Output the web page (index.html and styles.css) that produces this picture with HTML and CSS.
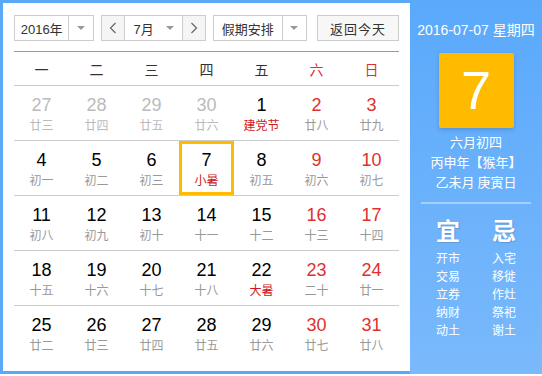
FILE: index.html
```html
<!DOCTYPE html>
<html lang="zh">
<head>
<meta charset="utf-8">
<title>万年历</title>
<link rel="stylesheet" href="styles.css">
</head>
<body>
<div class="widget">
  <div class="main">
    <div class="toolbar">
      <div class="select sel-year">
        <span class="sel-text">2016年</span>
        <span class="sel-arrow"><i class="tri"></i></span>
      </div>
      <div class="month-group">
        <span class="nav-btn"><svg width="8" height="12" viewBox="0 0 8 12"><polyline points="6.5,1 1.5,6 6.5,11" fill="none" stroke="#666" stroke-width="1.2"/></svg></span>
        <span class="month-mid"><span class="month-text">7月</span><i class="tri"></i></span>
        <span class="nav-btn"><svg width="8" height="12" viewBox="0 0 8 12"><polyline points="1.5,1 6.5,6 1.5,11" fill="none" stroke="#666" stroke-width="1.2"/></svg></span>
      </div>
      <div class="select sel-holiday">
        <span class="sel-text">假期安排</span>
        <span class="sel-arrow"><i class="tri"></i></span>
      </div>
      <div class="today-btn">返回今天</div>
    </div>
    <div class="calendar">
      <div class="week-head">
        <span>一</span><span>二</span><span>三</span><span>四</span><span>五</span><span class="red">六</span><span class="red">日</span>
      </div>
      <div class="row">
        <div class="cell other"><b>27</b><em>廿三</em></div>
        <div class="cell other"><b>28</b><em>廿四</em></div>
        <div class="cell other"><b>29</b><em>廿五</em></div>
        <div class="cell other"><b>30</b><em>廿六</em></div>
        <div class="cell"><b>1</b><em class="fest">建党节</em></div>
        <div class="cell weekend"><b>2</b><em>廿八</em></div>
        <div class="cell weekend"><b>3</b><em>廿九</em></div>
      </div>
      <div class="row">
        <div class="cell"><b>4</b><em>初一</em></div>
        <div class="cell"><b>5</b><em>初二</em></div>
        <div class="cell"><b>6</b><em>初三</em></div>
        <div class="cell today"><b>7</b><em class="fest">小暑</em></div>
        <div class="cell"><b>8</b><em>初五</em></div>
        <div class="cell weekend"><b>9</b><em>初六</em></div>
        <div class="cell weekend"><b>10</b><em>初七</em></div>
      </div>
      <div class="row">
        <div class="cell"><b>11</b><em>初八</em></div>
        <div class="cell"><b>12</b><em>初九</em></div>
        <div class="cell"><b>13</b><em>初十</em></div>
        <div class="cell"><b>14</b><em>十一</em></div>
        <div class="cell"><b>15</b><em>十二</em></div>
        <div class="cell weekend"><b>16</b><em>十三</em></div>
        <div class="cell weekend"><b>17</b><em>十四</em></div>
      </div>
      <div class="row">
        <div class="cell"><b>18</b><em>十五</em></div>
        <div class="cell"><b>19</b><em>十六</em></div>
        <div class="cell"><b>20</b><em>十七</em></div>
        <div class="cell"><b>21</b><em>十八</em></div>
        <div class="cell"><b>22</b><em class="fest">大暑</em></div>
        <div class="cell weekend"><b>23</b><em>二十</em></div>
        <div class="cell weekend"><b>24</b><em>廿一</em></div>
      </div>
      <div class="row">
        <div class="cell"><b>25</b><em>廿二</em></div>
        <div class="cell"><b>26</b><em>廿三</em></div>
        <div class="cell"><b>27</b><em>廿四</em></div>
        <div class="cell"><b>28</b><em>廿五</em></div>
        <div class="cell"><b>29</b><em>廿六</em></div>
        <div class="cell weekend"><b>30</b><em>廿七</em></div>
        <div class="cell weekend"><b>31</b><em>廿八</em></div>
      </div>
    </div>
  </div>
  <div class="side">
    <div class="side-date">2016-07-07 星期四</div>
    <div class="big-day">7</div>
    <div class="lunar">
      <div>六月初四</div>
      <div>丙申年【猴年】</div>
      <div>乙未月 庚寅日</div>
    </div>
    <div class="sep"></div>
    <div class="yiji">
      <div class="col">
        <div class="yj-title">宜</div>
        <div>开市</div><div>交易</div><div>立券</div><div>纳财</div><div>动土</div>
      </div>
      <div class="col">
        <div class="yj-title">忌</div>
        <div>入宅</div><div>移徙</div><div>作灶</div><div>祭祀</div><div>谢土</div>
      </div>
    </div>
  </div>
</div>
</body>
</html>
```
FILE: styles.css
```css
* { box-sizing: border-box; }
html, body { margin: 0; padding: 0; background: #fff; }
body { font-family: "Liberation Sans", "Noto Sans CJK SC", sans-serif; }

.widget {
  display: flex;
  width: 542px;
  height: 374px;
  border: 3px solid #5aa9f8;
  border-right: none;
}

.main {
  width: 407px;
  padding: 12px 11px 0 11px;
  background: #fff;
}

.toolbar {
  display: flex;
  height: 26px;
  font-size: 13px;
  color: #333;
  font-family: "Liberation Sans", "Noto Sans CJK SC", sans-serif;
}

.select {
  display: flex;
  border: 1px solid #ccc;
  background: #fff;
}
.sel-text {
  display: flex;
  align-items: center;
  justify-content: center;
  border-right: 1px solid #ccc;
}
.sel-arrow {
  display: flex;
  align-items: center;
  justify-content: center;
  width: 24px;
}
.tri {
  display: block;
  width: 0;
  height: 0;
  border-left: 4px solid transparent;
  border-right: 4px solid transparent;
  border-top: 4px solid #999;
}
.sel-year { width: 80px; }
.sel-year .sel-text { width: 55px; }
.sel-holiday { width: 94px; margin-left: 7px; }
.sel-holiday .sel-text { width: 70px; }

.month-group {
  display: flex;
  width: 105px;
  margin-left: 7px;
  border: 1px solid #ccc;
}
.nav-btn {
  display: flex;
  align-items: center;
  justify-content: center;
  width: 22px;
  background: #f5f5f5;
}
.month-mid {
  display: flex;
  align-items: center;
  width: 61px;
  padding-left: 9px;
  border-left: 1px solid #ccc;
  border-right: 1px solid #ccc;
  background: #fff;
}
.month-text { flex: 1; }
.month-mid .tri { margin-right: 8px; }

.today-btn {
  display: flex;
  align-items: center;
  justify-content: center;
  width: 82px;
  margin-left: 10px;
  border: 1px solid #ccc;
  background: #f7f7f7;
  letter-spacing: 1px;
}

.calendar {
  margin-top: 10px;
  border-top: 1px solid #5aa9f8;
  width: 385px;
}
.week-head {
  display: grid;
  grid-template-columns: repeat(7, 55px);
  height: 33px;
  align-items: center;
  font-size: 14px;
  color: #333;
  text-align: center;
  font-family: "Noto Sans CJK SC", sans-serif;
}
.week-head .red { color: #e0302f; }

.row {
  display: grid;
  grid-template-columns: repeat(7, 55px);
  height: 55px;
  border-top: 1px solid #ccc;
}
.cell {
  display: flex;
  flex-direction: column;
  align-items: center;
  padding-top: 9px;
}
.cell b {
  font-weight: normal;
  font-size: 18px;
  line-height: 20px;
  color: #000;
  font-family: "Liberation Sans", sans-serif;
}
.cell em {
  font-style: normal;
  font-size: 12px;
  line-height: 20px;
  color: #999;
  font-family: "Noto Sans CJK SC", sans-serif;
}
.cell.other b, .cell.other em { color: #bbb; }
.cell.weekend b { color: #e0302f; }
.cell em.fest { color: #d0171b; }
.cell.today {
  outline: 3px solid #ffbb00;
  outline-offset: -3px;
}

.side {
  flex: 1;
  display: flex;
  flex-direction: column;
  align-items: center;
  background: linear-gradient(#5aa9fb, #7ab9fb);
  color: #fff;
  padding-top: 17px;
  margin-top: -3px;
  margin-bottom: -3px;
}
.side-date {
  font-size: 14px;
  line-height: 20px;
  margin-top: 3px;
}
.big-day {
  width: 75px;
  height: 75px;
  margin-top: 13px;
  background: #ffbb00;
  border-radius: 2px;
  box-shadow: 0 2px 4px rgba(0, 0, 0, 0.15);
  font-size: 54px;
  line-height: 75px;
  text-align: center;
  font-family: "Liberation Sans", sans-serif;
}
.lunar {
  margin-top: 4px;
  font-size: 13px;
  line-height: 20px;
  text-align: center;
  font-family: "Noto Sans CJK SC", sans-serif;
}
.sep {
  width: 110px;
  height: 2px;
  margin-top: 10px;
  background: rgba(255, 255, 255, 0.4);
}
.yiji {
  display: flex;
  width: 112px;
  margin-top: 14px;
  font-size: 12px;
  line-height: 18px;
  font-family: "Noto Sans CJK SC", sans-serif;
}
.yiji .col {
  width: 56px;
  display: flex;
  flex-direction: column;
  align-items: center;
}
.yj-title {
  font-size: 24px;
  line-height: 24px;
  font-weight: bold;
  margin-bottom: 7px;
  text-shadow: 1px 1px 1px rgba(0, 0, 0, 0.15);
}
```
